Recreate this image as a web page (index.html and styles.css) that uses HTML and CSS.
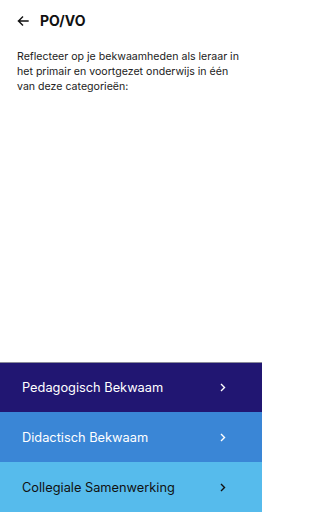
FILE: index.html
```html
<!DOCTYPE html>
<html lang="nl">
<head>
<meta charset="utf-8">
<link rel="stylesheet" href="styles.css">
</head>
<body>
<div class="screen">
  <header class="topbar">
    <svg class="back" width="12" height="10" viewBox="0 0 12 10" aria-hidden="true">
      <path d="M11 5H1.5M5.5 1L1.5 5l4 4" fill="none" stroke="#111" stroke-width="1.4" stroke-linecap="square"/>
    </svg>
    <h1 class="title">PO/VO</h1>
  </header>
  <p class="intro">Reflecteer op je bekwaamheden als leraar in het primair en voortgezet onderwijs in één van deze categorieën:</p>
  <div class="spacer"></div>
  <nav class="menu">
    <a class="item item-1">Pedagogisch Bekwaam<svg class="chev" width="6" height="9" viewBox="0 0 6 9"><path d="M1 1l3.5 3.5L1 8" fill="none" stroke="currentColor" stroke-width="1.4"/></svg></a>
    <a class="item item-2">Didactisch Bekwaam<svg class="chev" width="6" height="9" viewBox="0 0 6 9"><path d="M1 1l3.5 3.5L1 8" fill="none" stroke="currentColor" stroke-width="1.4"/></svg></a>
    <a class="item item-3">Collegiale Samenwerking<svg class="chev" width="6" height="9" viewBox="0 0 6 9"><path d="M1 1l3.5 3.5L1 8" fill="none" stroke="currentColor" stroke-width="1.4"/></svg></a>
  </nav>
</div>
</body>
</html>
```
FILE: styles.css
```css
html, body { margin: 0; padding: 0; }
body { font-family: Inter, "Noto Sans", sans-serif; background: #fff; color: #1a1a1a; }
.screen { width: 262px; height: 512px; display: flex; flex-direction: column; }
.topbar { display: flex; align-items: center; height: 40px; padding: 0 0 0 17px; }
.back { margin-top: 1px; }
.title { margin: 0 0 0 11px; font-size: 14px; font-weight: 700; color: #111; }
.intro { margin: 9px 17px 0 17px; font-size: 10.6px; line-height: 15px; color: #222; }
.spacer { flex: 1; }
.menu { display: flex; flex-direction: column; border-top: 1px solid #8a8a9a; }
.item { height: 50px; display: flex; align-items: center; padding: 0 36px 0 22px; font-size: 12.8px; color: #fff; justify-content: space-between; }
.item-1 { background: #211672; height: 49px; }
.item-2 { background: #3a86d6; }
.item-3 { background: #56bbec; color: #111; }
.chev { display: block; }
```
